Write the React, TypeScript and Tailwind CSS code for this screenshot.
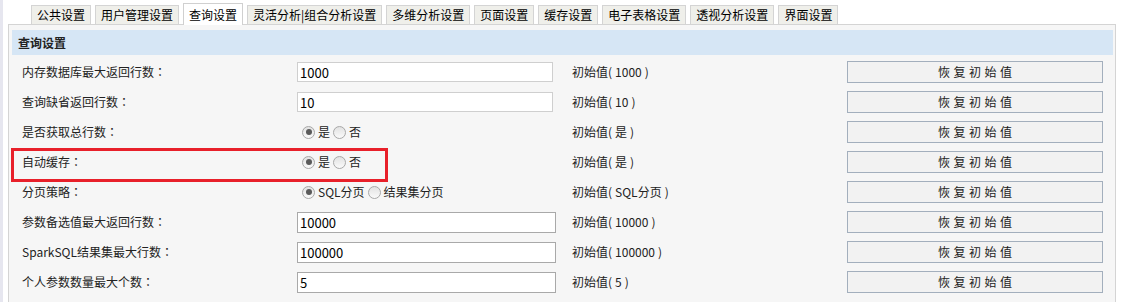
import React from 'react';

const tabs = ['公共设置', '用户管理设置', '查询设置', '灵活分析|组合分析设置', '多维分析设置', '页面设置', '缓存设置', '电子表格设置', '透视分析设置', '界面设置'];

type Row = {
  label: string;
  kind: 'input' | 'radio';
  value?: string;
  options?: string[];
  init: string;
  dark?: boolean;
  boxed?: boolean;
};

const rows: Row[] = [
  { label: '内存数据库最大返回行数', kind: 'input', value: '1000', init: '1000' },
  { label: '查询缺省返回行数', kind: 'input', value: '10', init: '10' },
  { label: '是否获取总行数', kind: 'radio', options: ['是', '否'], init: '是' },
  { label: '自动缓存', kind: 'radio', options: ['是', '否'], init: '是', boxed: true },
  { label: '分页策略', kind: 'radio', options: ['SQL分页', '结果集分页'], init: 'SQL分页' },
  { label: '参数备选值最大返回行数', kind: 'input', value: '10000', init: '10000', dark: true },
  { label: 'SparkSQL结果集最大行数', kind: 'input', value: '100000', init: '100000', dark: true },
  { label: '个人参数数量最大个数', kind: 'input', value: '5', init: '5', dark: true },
];

function Radio({ checked }: { checked: boolean }) {
  return (
    <span className="flex h-[13px] w-[13px] items-center justify-center rounded-full border border-[#a8a8a8] bg-gradient-to-b from-[#e2e2e2] to-[#fafafa]">
      {checked && <span className="h-[6px] w-[6px] rounded-full bg-[#5a5a5a]" />}
    </span>
  );
}

export default function App() {
  return (
    <div className="h-[302px] w-[1121px] overflow-hidden border-l-[3px] border-[#e6e6ef] bg-white font-['Noto_Sans_CJK_SC','Microsoft_YaHei',sans-serif] text-[12px] text-[#222]">
      <div className="pl-[5px] pr-[5px]">
        {/* tabs */}
        <div className="relative z-10 flex h-[25px] items-end gap-[4px] pl-[23px]">
          {tabs.map((t, i) =>
            i === 2 ? (
              <div
                key={t}
                className="flex h-[22px] items-center border border-b-0 border-[#d0d0d0] bg-white px-[5px] leading-none text-black"
              >
                {t}
              </div>
            ) : (
              <div
                key={t}
                className="mb-[1px] flex h-[19px] items-center border border-b-0 border-[#d4d4d4] bg-[#efefea] px-[5px] leading-none text-black"
              >
                {t}
              </div>
            )
          )}
        </div>
        {/* panel */}
        <div className="-mt-[1px] h-[300px] w-[1108px] border border-[#d4d4d4] bg-[#f6f6f6] pl-[3px] pr-[2px] pt-[5px]">
          <div className="flex h-[25px] items-center bg-[#d6e6f5] pl-[6px] font-bold leading-none text-[#222]">查询设置</div>
          <div className="mt-[2px] flex flex-col">
            {rows.map((r) => (
              <div key={r.label} className="relative flex h-[30px] items-center pl-[10px] leading-none">
                <div className="w-[275px] shrink-0">
                  {r.label}
                  <span className="font-['Noto_Sans_CJK_TC',sans-serif]">：</span>
                </div>
                <div className="flex w-[275px] shrink-0 items-center">
                  {r.kind === 'input' ? (
                    <div
                      className={
                        r.dark
                          ? 'flex h-[21px] w-[259px] items-center border border-[#a9a9a9] bg-white pl-[2px] text-[13px] text-black'
                          : 'flex h-[20px] w-[256px] items-center border border-[#cfcfcf] bg-white pl-[2px] text-[13px] text-black'
                      }
                    >
                      {r.value}
                    </div>
                  ) : (
                    <div className="flex items-center pl-[5px]">
                      <Radio checked />
                      <span className="ml-[3px] mr-[3px]">{r.options![0]}</span>
                      <Radio checked={false} />
                      <span className="ml-[3px]">{r.options![1]}</span>
                    </div>
                  )}
                </div>
                <div className="w-[275px] shrink-0">
                  初始值(<span className="ml-[3px] mr-[3px]">{r.init}</span>)
                </div>
                <div className="flex h-[22px] w-[256px] shrink-0 items-center justify-center border border-[#a3afbd] bg-[#f2f2f2] tracking-[3.5px] text-[#222]">
                  <span className="pl-[3.5px]">恢复初始值</span>
                </div>
                {r.boxed && (
                  <div className="pointer-events-none absolute left-[-1px] top-[1px] h-[34px] w-[377px] border-[3px] border-[#e8202a]" />
                )}
              </div>
            ))}
          </div>
        </div>
      </div>
    </div>
  );
}
